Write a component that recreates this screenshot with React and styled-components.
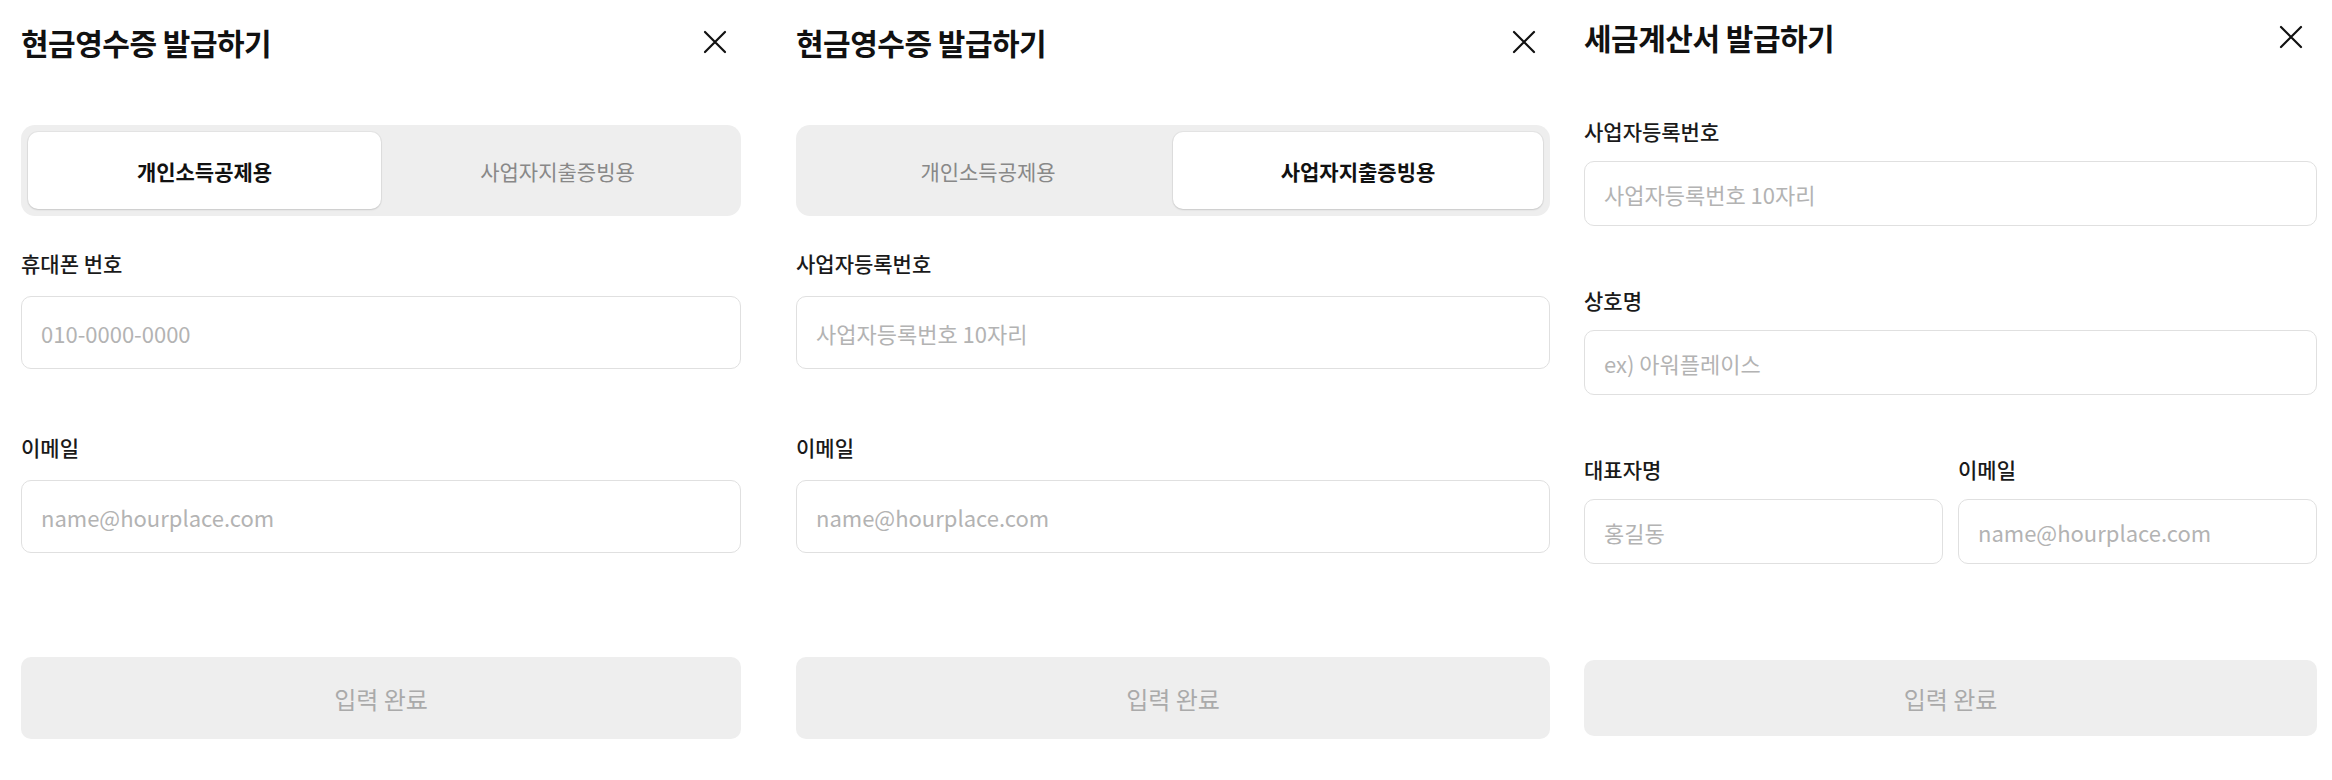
import styled, { createGlobalStyle } from "styled-components";

const GlobalStyle = createGlobalStyle`
  body {
    margin: 0;
    background: #ffffff;
    font-family: "Noto Sans CJK KR", "Noto Sans", sans-serif;
    color: #111111;
  }
  * {
    box-sizing: border-box;
  }
`;

const Page = styled.div`
  display: flex;
  align-items: flex-start;
  width: 2332px;
  height: 780px;
  overflow: hidden;
`;

const Sheet = styled.section`
  width: ${(p) => p.$width}px;
  margin-left: ${(p) => p.$offset}px;
  display: flex;
  flex-direction: column;
`;

const Header = styled.header`
  display: flex;
  align-items: center;
  justify-content: space-between;
  height: ${(p) => (p.$compact ? 74 : 84)}px;
`;

const Title = styled.h1`
  margin: 0;
  font-size: 30px;
  font-weight: 700;
  letter-spacing: -0.5px;
  color: #111111;
`;

const CloseButton = styled.button`
  border: none;
  background: none;
  padding: 0;
  margin-right: 14px;
  width: 24px;
  height: 24px;
  display: flex;
  align-items: center;
  justify-content: center;
  cursor: pointer;
`;

const Segment = styled.div`
  margin-top: 41px;
  height: 91px;
  padding: 7px;
  border-radius: 14px;
  background: #eeeeee;
  display: grid;
  grid-template-columns: 1fr 1fr;
`;

const Tab = styled.button`
  border: none;
  border-radius: 10px;
  font-family: inherit;
  font-size: 21px;
  font-weight: ${(p) => (p.$active ? 700 : 400)};
  color: ${(p) => (p.$active ? "#111111" : "#888888")};
  background: ${(p) => (p.$active ? "#ffffff" : "transparent")};
  box-shadow: ${(p) =>
    p.$active ? "0 1px 2px rgba(0, 0, 0, 0.12), 0 0 0 1px rgba(0, 0, 0, 0.04)" : "none"};
`;

const Field = styled.div`
  display: flex;
  flex-direction: column;
  margin-top: ${(p) => p.$gap}px;
  flex: 1;
`;

const Row = styled.div`
  display: grid;
  grid-template-columns: 1fr 1fr;
  column-gap: 15px;
`;

const Label = styled.label`
  font-size: 21px;
  font-weight: 500;
  line-height: 28px;
  color: #1a1a1a;
`;

const Input = styled.input`
  margin-top: ${(p) => (p.$compact ? 16 : 19)}px;
  height: ${(p) => (p.$compact ? 65 : 73)}px;
  border: 1.5px solid #e0e0e0;
  border-radius: 10px;
  padding: 0 19px;
  font-family: inherit;
  font-size: 22px;
  color: #111111;
  outline: none;
  background: #ffffff;

  &::placeholder {
    color: #b3b3b3;
  }
`;

const Submit = styled.button`
  margin-top: ${(p) => p.$gap}px;
  height: ${(p) => (p.$compact ? 76 : 82)}px;
  border: none;
  border-radius: 10px;
  background: #eeeeee;
  font-family: inherit;
  font-size: 24px;
  color: #aaaaaa;
`;

const CloseIcon = () => (
  <svg width="24" height="24" viewBox="0 0 24 24" fill="none">
    <path d="M2 2L22 22M22 2L2 22" stroke="#111111" strokeWidth="2.2" strokeLinecap="round" />
  </svg>
);

const SheetHeader = ({ title, compact }) => (
  <Header $compact={compact}>
    <Title>{title}</Title>
    <CloseButton aria-label="닫기">
      <CloseIcon />
    </CloseButton>
  </Header>
);

const CashReceipt = ({ width, offset, business }) => (
  <Sheet $width={width} $offset={offset}>
    <SheetHeader title="현금영수증 발급하기" />
    <Segment>
      <Tab $active={!business}>개인소득공제용</Tab>
      <Tab $active={business}>사업자지출증빙용</Tab>
    </Segment>
    <Field $gap={33}>
      <Label>{business ? "사업자등록번호" : "휴대폰 번호"}</Label>
      <Input placeholder={business ? "사업자등록번호 10자리" : "010-0000-0000"} />
    </Field>
    <Field $gap={64}>
      <Label>이메일</Label>
      <Input placeholder="name@hourplace.com" />
    </Field>
    <Submit $gap={104}>입력 완료</Submit>
  </Sheet>
);

const TaxInvoice = ({ width, offset }) => (
  <Sheet $width={width} $offset={offset}>
    <SheetHeader title="세금계산서 발급하기" compact />
    <Field $gap={43}>
      <Label>사업자등록번호</Label>
      <Input $compact placeholder="사업자등록번호 10자리" />
    </Field>
    <Field $gap={60}>
      <Label>상호명</Label>
      <Input $compact placeholder="ex) 아워플레이스" />
    </Field>
    <Row>
      <Field $gap={60}>
        <Label>대표자명</Label>
        <Input $compact placeholder="홍길동" />
      </Field>
      <Field $gap={60}>
        <Label>이메일</Label>
        <Input $compact placeholder="name@hourplace.com" />
      </Field>
    </Row>
    <Submit $compact $gap={96}>
      입력 완료
    </Submit>
  </Sheet>
);

export default function App() {
  return (
    <>
      <GlobalStyle />
      <Page>
        <CashReceipt width={720} offset={21} />
        <CashReceipt width={754} offset={55} business />
        <TaxInvoice width={733} offset={34} />
      </Page>
    </>
  );
}
